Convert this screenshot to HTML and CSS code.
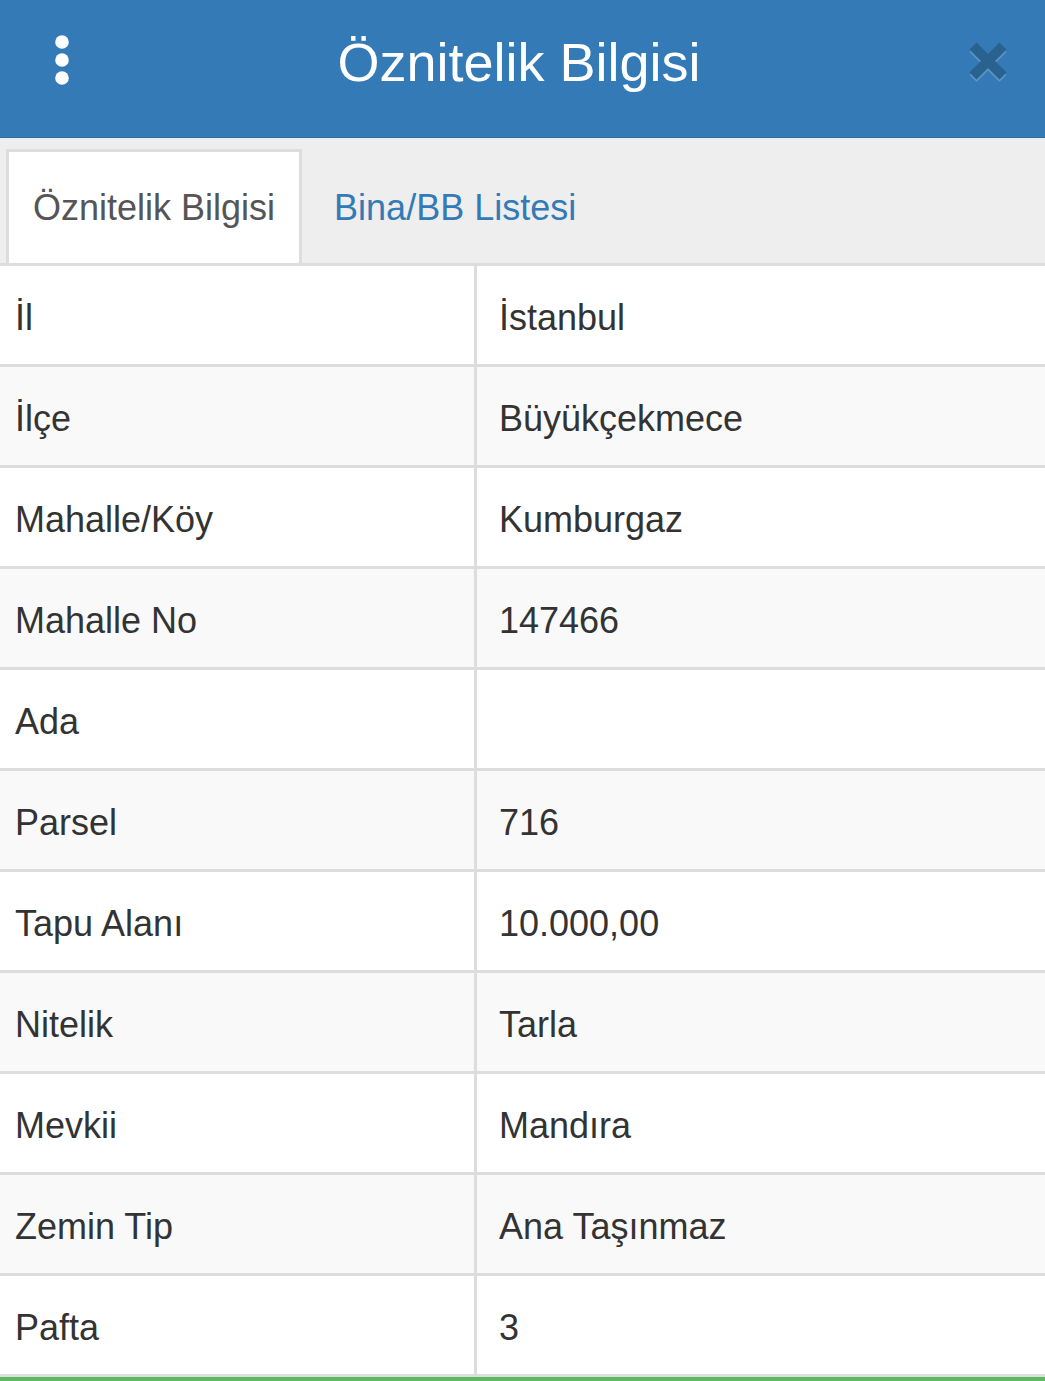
FILE: index.html
```html
<!DOCTYPE html>
<html lang="tr">
<head>
    <meta charset="UTF-8">
    <meta name="viewport" content="width=device-width, initial-scale=1.0">
    <title>Öznitelik Bilgisi</title>
    <link rel="stylesheet" href="styles.css">
</head>
<body>

    <!-- Top Bar -->
    <header class="topbar">
        <div class="topbar-left">
            <button class="menu-btn" aria-label="Menü">
                <svg width="14" height="50" viewBox="0 0 14 50">
                    <circle cx="7" cy="7" r="6.8" fill="#fff"/>
                    <circle cx="7" cy="25" r="6.8" fill="#fff"/>
                    <circle cx="7" cy="43" r="6.8" fill="#fff"/>
                </svg>
            </button>
        </div>
        <h1 class="topbar-title">Öznitelik Bilgisi</h1>
        <div class="topbar-right">
            <button class="close-btn" aria-label="Kapat">
                <svg width="40" height="42" viewBox="0 0 40 42">
                    <g stroke="#5b94c4" stroke-width="10" transform="translate(0 2.5)">
                        <line x1="5" y1="5" x2="35" y2="35"/>
                        <line x1="35" y1="5" x2="5" y2="35"/>
                    </g>
                    <g stroke="#29628f" stroke-width="10">
                        <line x1="5" y1="5" x2="35" y2="35"/>
                        <line x1="35" y1="5" x2="5" y2="35"/>
                    </g>
                </svg>
            </button>
        </div>
    </header>

    <!-- Tabs -->
    <ul class="nav-tabs">
        <li class="active"><a href="#">Öznitelik Bilgisi</a></li>
        <li><a href="#">Bina/BB Listesi</a></li>
    </ul>

    <!-- Attribute Table -->
    <table class="attr-table">
        <tbody>
            <tr><td>İl</td><td>İstanbul</td></tr>
            <tr><td>İlçe</td><td>Büyükçekmece</td></tr>
            <tr><td>Mahalle/Köy</td><td>Kumburgaz</td></tr>
            <tr><td>Mahalle No</td><td>147466</td></tr>
            <tr><td>Ada</td><td></td></tr>
            <tr><td>Parsel</td><td>716</td></tr>
            <tr><td>Tapu Alanı</td><td>10.000,00</td></tr>
            <tr><td>Nitelik</td><td>Tarla</td></tr>
            <tr><td>Mevkii</td><td>Mandıra</td></tr>
            <tr><td>Zemin Tip</td><td>Ana Taşınmaz</td></tr>
            <tr><td>Pafta</td><td>3</td></tr>
        </tbody>
    </table>

    <div class="footer-line"></div>

</body>
</html>
```

FILE: styles.css
```css
/* Global Styles */
body {
    font-family: "Liberation Sans", Arial, Helvetica, sans-serif;
    color: #333;
    background-color: #fff;
    margin: 0;
    padding: 0;
}

button {
    background: none;
    border: none;
    padding: 0;
    cursor: pointer;
}

/* Top Bar */
.topbar {
    display: grid;
    grid-template-columns: 1fr auto 1fr;
    align-items: center;
    height: 138px;
    box-sizing: border-box;
    padding-bottom: 13px;
    background-color: #337ab7;
    border-bottom: 1px solid #2e6da4;
}

.topbar-left {
    padding-left: 55px;
}

.menu-btn svg,
.close-btn svg {
    display: block;
}

.topbar-title {
    margin: 0;
    padding-right: 7px;
    font-size: 54px;
    font-weight: normal;
    line-height: 62px;
    color: #fff;
}

.topbar-right {
    display: flex;
    justify-content: flex-end;
    padding-right: 37px;
}

/* Tabs */
.nav-tabs {
    display: flex;
    list-style: none;
    margin: 0;
    padding: 10px 0 0 6px;
    background-color: #eee;
    border-top: 1px solid #e3eff5;
    border-bottom: 3px solid #ddd;
}

.nav-tabs li {
    margin-right: 5px;
}

.nav-tabs a {
    display: block;
    padding: 35px 24px 35px;
    font-size: 36px;
    line-height: 41px;
    color: #337ab7;
    text-decoration: none;
    border: 3px solid transparent;
    border-bottom: none;
}

.nav-tabs li.active a {
    color: #555;
    background-color: #fff;
    border-color: #ddd;
}

/* Attribute Table */
.attr-table {
    width: 100%;
    border-collapse: separate;
    border-spacing: 0;
    table-layout: fixed;
}

.attr-table td {
    height: 101px;
    box-sizing: border-box;
    padding: 5px 22px 0;
    font-size: 36px;
    line-height: 41px;
    vertical-align: middle;
    border-bottom: 3px solid #ddd;
}

.attr-table td:first-child {
    width: 477px;
    padding-left: 15px;
    border-right: 3px solid #ddd;
}

.attr-table tr:nth-child(even) td {
    background-color: #f9f9f9;
}

.footer-line {
    height: 5px;
    background-color: #5cb85c;
}
```
